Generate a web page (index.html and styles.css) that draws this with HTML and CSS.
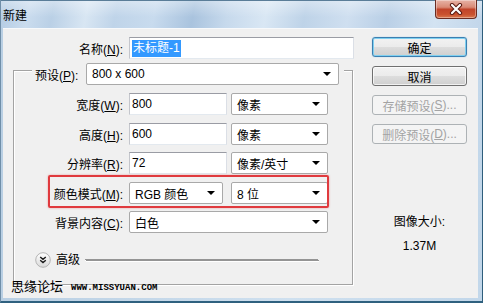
FILE: index.html
```html
<!DOCTYPE html>
<html lang="zh">
<head>
<meta charset="utf-8">
<title>新建</title>
<link rel="stylesheet" href="styles.css">
</head>
<body>
<div class="window">
  <div class="titlebar">
    <span class="title">新建</span>
    <div class="close">
      <svg width="16" height="12" viewBox="0 0 16 12">
        <path d="M4 2 L12 10 M12 2 L4 10" stroke="#5a1a12" stroke-width="4.2" stroke-linecap="round" fill="none"/>
        <path d="M4 2 L12 10 M12 2 L4 10" stroke="#ffffff" stroke-width="2.2" stroke-linecap="round" fill="none"/>
      </svg>
    </div>
  </div>
  <div class="content">
    <div class="main">
      <div class="name-row">
        <span class="lbl name-lbl">名称(<u>N</u>):</span>
        <div class="field name-field"><span class="sel">未标题-1</span></div>
      </div>
      <div class="group">
        <div class="preset-row">
          <span class="preset-lbl">预设(<u>P</u>):</span>
          <div class="dropdown preset-dd"><span>800 x 600</span><i class="arrow"></i></div>
        </div>
        <div class="row">
          <span class="lbl">宽度(<u>W</u>):</span>
          <div class="field num">800</div>
          <div class="dropdown unit"><span>像素</span><i class="arrow"></i></div>
        </div>
        <div class="row">
          <span class="lbl">高度(<u>H</u>):</span>
          <div class="field num">600</div>
          <div class="dropdown unit"><span>像素</span><i class="arrow"></i></div>
        </div>
        <div class="row tight">
          <span class="lbl">分辨率(<u>R</u>):</span>
          <div class="field num">72</div>
          <div class="dropdown unit"><span>像素/英寸</span><i class="arrow"></i></div>
        </div>
        <div class="row mark-row">
          <span class="lbl">颜色模式(<u>M</u>):</span>
          <div class="dropdown mode"><span>RGB 颜色</span><i class="arrow"></i></div>
          <div class="dropdown unit bits"><span>8 位</span><i class="arrow"></i></div>
          <div class="redbox"></div>
        </div>
        <div class="row tight">
          <span class="lbl">背景内容(<u>C</u>):</span>
          <div class="dropdown bg-dd"><span>白色</span><i class="arrow"></i></div>
        </div>
        <div class="more-row">
          <span class="more-btn">
            <svg width="16" height="16" viewBox="0 0 16 16">
              <defs>
                <linearGradient id="cg" x1="0" y1="0" x2="0" y2="1">
                  <stop offset="0" stop-color="#ffffff"/>
                  <stop offset="1" stop-color="#d9d9d9"/>
                </linearGradient>
              </defs>
              <circle cx="8" cy="8" r="7.3" fill="url(#cg)" stroke="#b4b4b4" stroke-width="1"/>
              <path d="M5.2 5 L8 7.3 L10.8 5 M5.2 8.2 L8 10.5 L10.8 8.2" stroke="#1a1a1a" stroke-width="1.4" fill="none"/>
            </svg>
          </span>
          <span class="more-text">高级</span>
          <svg class="sep-rule" width="233" height="2" viewBox="0 0 233 2">
            <rect x="0" y="0" width="233" height="1" fill="#949494"/>
            <rect x="0" y="1" width="233" height="1" fill="#ffffff"/>
          </svg>
        </div>
      </div>
    </div>
    <div class="side">
      <div class="btn default">确定</div>
      <div class="btn">取消</div>
      <div class="btn disabled">存储预设(<u>S</u>)...</div>
      <div class="btn disabled">删除预设(<u>D</u>)...</div>
      <div class="size-info">
        <div class="size-lbl">图像大小:</div>
        <div class="size-val">1.37M</div>
      </div>
    </div>
  </div>
  <div class="watermark"><span class="wm-cn">思缘论坛</span><span class="wm-url">www.missyuan.com</span></div>
</div>
</body>
</html>
```

FILE: styles.css
```css
* { box-sizing: border-box; }
html, body { margin: 0; padding: 0; }
body {
  width: 483px;
  height: 303px;
  overflow: hidden;
  background: #ffffff;
  font-family: "Liberation Sans", "Noto Sans CJK SC", sans-serif;
  font-size: 12px;
  color: #000;
}
u { text-decoration: underline; text-underline-offset: 1px; }

.window {
  position: relative;
  width: 483px;
  height: 303px;
  display: flex;
  flex-direction: column;
  background: linear-gradient(90deg, #b9cfe3, #cfe0ef 60%, #c2d7ea);
  border-bottom: 2px solid #2f617f;
  border-right: 1px solid #2f5e7c;
  border-left: 1px solid #6f8ea8;
}

.titlebar {
  height: 28px;
  flex: none;
  display: flex;
  align-items: flex-start;
  background:
    linear-gradient(180deg, rgba(255,255,255,0.35), rgba(255,255,255,0) 60%),
    linear-gradient(100deg, #b3cbe3 0%, #cadcee 6%, #bad0e6 11%, #d8e6f3 18%, #bfd4e9 24%, #c8dbee 32%, #a9c3de 40%, #c6d9ec 47%, #d9e7f4 55%, #bed3e8 63%, #cfdff0 72%, #b9cfe6 80%, #d3e3f2 90%, #c2d6ea 100%);
  border-top: 1px solid #5a7d98;
}
.title {
  margin: 8px 0 0 2px;
  font-size: 12px;
  line-height: 14px;
  color: #000;
}
.close {
  margin: -1px 5px 0 auto;
  width: 42px;
  height: 19px;
  border: 1px solid #6a2c22;
  border-top: none;
  border-radius: 0 0 4px 4px;
  background: linear-gradient(180deg, #e7b3a6 0%, #d98a76 40%, #c1442a 52%, #c9522f 80%, #d9794f 100%);
  display: flex;
  align-items: center;
  justify-content: center;
  box-shadow: inset 0 0 0 1px rgba(255,255,255,0.35);
}

.content {
  flex: 1;
  display: flex;
  margin: 0 4px 3px 2px;
  background: #f0f0f0;
  border-top: 1px solid #f7f9fb;
}

.main {
  width: 352px;
  flex: none;
  padding-top: 8px;
}

.name-row {
  display: flex;
  height: 22px;
  align-items: center;
}
.lbl {
  flex: none;
  text-align: right;
  margin-right: 6px;
  white-space: nowrap;
}
.name-lbl { width: 120px; }

.field {
  height: 22px;
  background: #fff;
  border: 1px solid #abadb3;
  border-top-color: #9a9ca4;
  border-left-color: #c4c6cc;
  border-right-color: #dbdfe6;
  border-bottom-color: #e3e9ef;
  display: flex;
  align-items: center;
  padding-left: 2px;
  white-space: nowrap;
}
.name-field { width: 225px; }
.sel {
  background: #3399ff;
  color: #fff;
  padding: 1px 1px;
  line-height: 15px;
}
.num { width: 98px; }

.group {
  margin: 11px 0 0 10px;
  width: 340px;
  height: 215px;
  border: 1px solid #a3a3a3;
  box-shadow: 1px 1px 0 #ffffff, inset 1px 1px 0 #ffffff;
  display: flex;
  flex-direction: column;
}

.preset-row {
  align-self: flex-start;
  display: flex;
  align-items: center;
  height: 22px;
  margin: -8px 0 0 18px;
  padding: 0 5px 0 3px;
  background: #f0f0f0;
}
.preset-lbl { width: 51px; white-space: nowrap; }
.preset-dd { width: 253px; }

.dropdown {
  height: 22px;
  background: #fff;
  border: 1px solid #a9a9a9;
  border-radius: 2px;
  display: flex;
  align-items: center;
  justify-content: space-between;
  padding: 0 7px 0 5px;
  white-space: nowrap;
}
.arrow {
  width: 0;
  height: 0;
  border-left: 4px solid transparent;
  border-right: 4px solid transparent;
  border-top: 4px solid #000;
}

.row {
  position: relative;
  display: flex;
  align-items: center;
  height: 22px;
  margin-top: 8px;
}
.row.tight { margin-top: 7px; }
.row .lbl { width: 109px; }
.unit { width: 97px; margin-left: 4px; }
.mode { width: 94px; }
.bits { margin-left: 8px; }
.bg-dd { width: 199px; }

.redbox {
  position: absolute;
  left: 34px;
  top: -7px;
  width: 281px;
  height: 33px;
  border: 2px solid #e03a3e;
  border-radius: 2px;
  box-shadow: 0 0 2px rgba(224, 58, 62, 0.5);
  pointer-events: none;
}

.more-row {
  display: flex;
  align-items: center;
  height: 16px;
  margin: 19px 0 0 21px;
  background:
    linear-gradient(#949494, #949494) 50px 7px / 233px 1px no-repeat,
    linear-gradient(#ffffff, #ffffff) 50px 8px / 233px 1px no-repeat;
}
.more-btn { display: flex; flex: none; width: 16px; height: 16px; }
.more-text { flex: none; margin-left: 5px; line-height: 14px; }
.sep-rule {
  display: block;
  flex: none;
  margin-left: 6px;
  margin-top: 1px;
}

.side {
  width: 95px;
  margin-left: 17px;
  padding-top: 8px;
  display: flex;
  flex-direction: column;
}
.btn {
  height: 20px;
  margin-bottom: 9px;
  border: 1px solid #707070;
  border-radius: 3px;
  background: linear-gradient(180deg, #f2f2f2 0%, #ebebeb 50%, #dddddd 51%, #cfcfcf 100%);
  box-shadow: inset 0 0 0 1px rgba(255,255,255,0.7);
  display: flex;
  align-items: center;
  justify-content: center;
  white-space: nowrap;
}
.btn.default {
  border-color: #3c7fb1;
  box-shadow: inset 0 0 0 1px #7fd0f0, 0 0 1px #5ab6e4;
}
.btn.disabled {
  color: #a3a3a3;
  border-color: #adb2b5;
  background: #f4f4f4;
  box-shadow: none;
}

.size-info {
  margin-top: 62px;
  text-align: center;
  line-height: 15px;
}
.size-val { margin-top: 9px; }

.watermark {
  position: absolute;
  left: 10px;
  top: 279px;
  display: flex;
  align-items: center;
  white-space: nowrap;
}
.wm-cn { font-size: 13px; line-height: 16px; }
.wm-url {
  margin-left: 8px;
  font-family: "Liberation Mono", "DejaVu Sans Mono", monospace;
  font-weight: bold;
  font-size: 9px;
  text-transform: uppercase;
  letter-spacing: 0;
  line-height: 10px;
  margin-top: 2px;
}
```
